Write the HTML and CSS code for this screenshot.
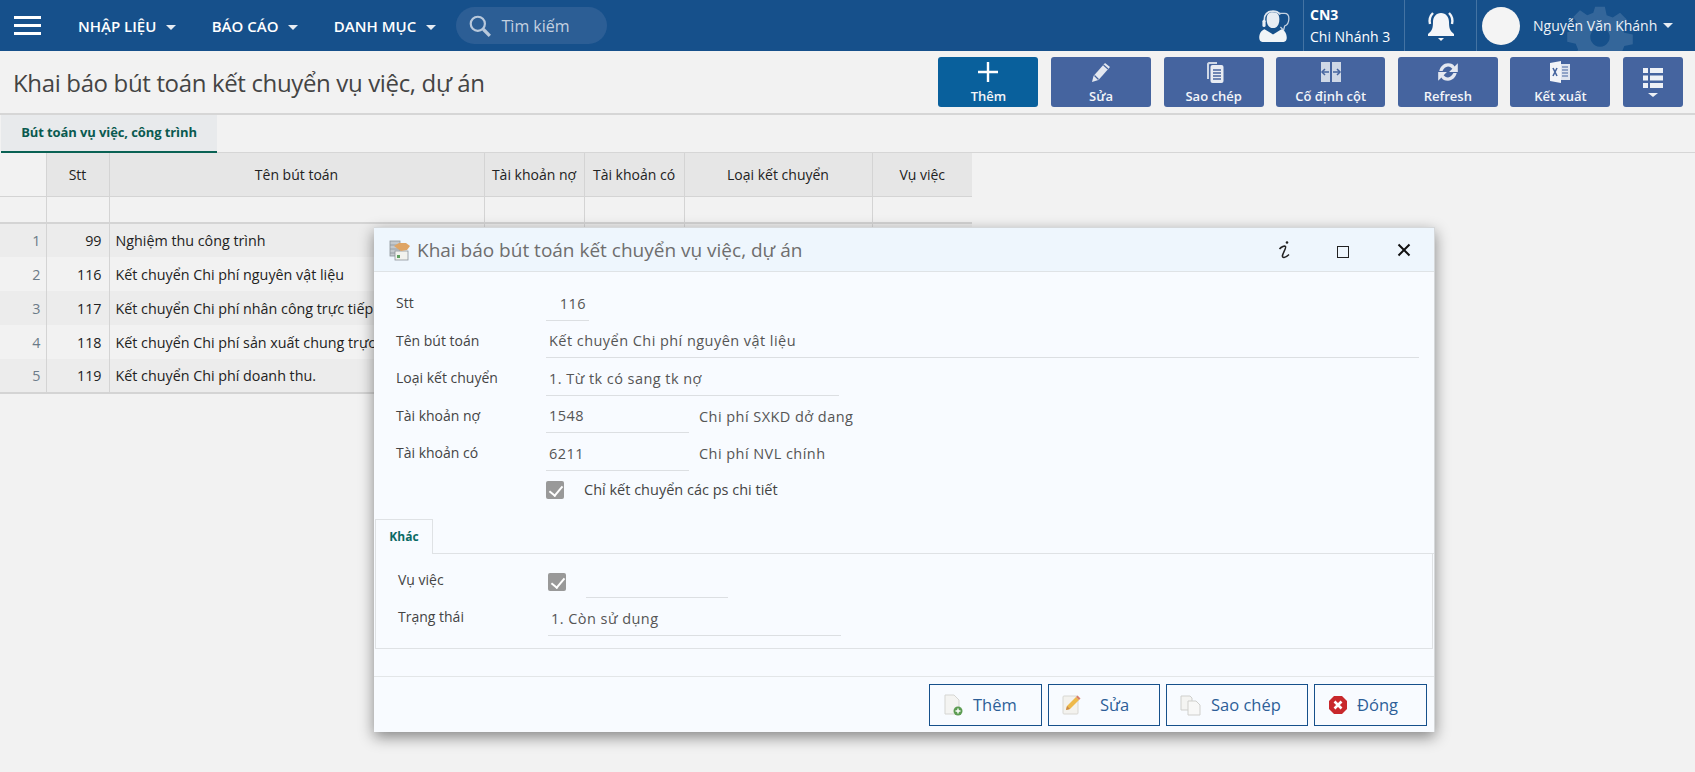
FILE: index.html
```html
<!DOCTYPE html>
<html lang="vi">
<head>
<meta charset="utf-8">
<title>Khai báo bút toán kết chuyển vụ việc, dự án</title>
<link rel="stylesheet" href="styles.css">
</head>
<body>

<!-- thanh menu -->
<header class="navbar">
    <svg class="gear" viewBox="-6 -6 112 112"><path fill="#fff" fill-opacity=".13" fill-rule="evenodd" d="M42 0h16l3 14 10 4 12-8 11 11-8 12 4 10 14 3v16l-14 3-4 10 8 12-11 11-12-8-10 4-3 14H42l-3-14-10-4-12 8L6 83l8-12-4-10-14-3V42l14-3 4-10-8-12L17 6l12 8 10-4zM50 34a16 16 0 1 0 .01 0z"/></svg>
    <div class="hamburger"><span></span><span></span><span></span></div>
    <nav class="menu">
        <a class="menu-item">NHẬP LIỆU <i class="caret"></i></a>
        <a class="menu-item">BÁO CÁO <i class="caret"></i></a>
        <a class="menu-item">DANH MỤC <i class="caret"></i></a>
    </nav>
    <div class="search">
        <svg width="24" height="24" viewBox="0 0 22 22"><circle cx="9" cy="9" r="6.5" fill="none" stroke="#b9c9dc" stroke-width="2"/><path d="M14 14l6 6" stroke="#b9c9dc" stroke-width="3"/></svg>
        <span>Tìm kiếm</span>
    </div>
    <div class="nav-right">
        <div class="nav-cell support">
            <svg width="36" height="36" viewBox="0 0 34 34">
                <path d="M17 4c5 0 6 3 6 7s-2 8-6 8-6-4-6-8 1-7 6-7z" fill="#e8edf3"/>
                <path d="M9 13c-1-7 3-10 8-10 3 0 5 1 7 3" fill="none" stroke="#dfe6ee" stroke-width="1.6"/>
                <rect x="7" y="11" width="3" height="7" rx="1.5" fill="#e8edf3"/>
                <path d="M22 5h6c3 0 4 2 4 5s-1 6-4 7l-1 4-3-3" fill="none" stroke="#c5d2e1" stroke-width="1.2"/>
                <path d="M9 20c-3 1-5 4-5 8 0 2 1 4 3 4h20c2 0 3-2 3-4 0-4-2-7-5-8l-8 5z" fill="#f1f4f7"/>
            </svg>
        </div>
        <div class="nav-cell branch">
            <b>CN3</b>
            <span>Chi Nhánh 3</span>
        </div>
        <div class="nav-cell bell">
            <svg width="32" height="34" viewBox="0 0 32 34">
                <path d="M16 4c5 0 8 4 8 9 0 6 1 9 5 12v2H3v-2c4-3 5-6 5-12 0-5 3-9 8-9z" fill="#f4f6f9"/>
                <path d="M13 29h6l-3 3z" fill="#f4f6f9"/>
                <path d="M5 15c-1-4 0-8 3-11M27 15c1-4 0-8-3-11" fill="none" stroke="#f4f6f9" stroke-width="2.4"/>
            </svg>
        </div>
        <div class="user">
            <div class="avatar"></div>
            <span>Nguyễn Văn Khánh</span>
            <i class="caret"></i>
        </div>
    </div>
</header>

<!-- tiêu đề + nút lệnh -->
<section class="toolbar">
    <h1>Khai báo bút toán kết chuyển vụ việc, dự án</h1>
    <div class="actions">
        <a class="action primary w100">
            <svg width="24" height="24" viewBox="0 0 24 24"><path d="M12 2v20M2 12h20" stroke="#fff" stroke-width="2.4"/></svg>
            Thêm
        </a>
        <a class="action w100">
            <svg width="24" height="24" viewBox="0 0 24 24"><path d="M3 22l1.500-6L16 3l5 4L9.500 20z" fill="#e4e8f0"/><path d="M5.500 15.500l4 4" stroke="#45649f" stroke-width="1.200"/><path d="M14.500 5l4.500 4" stroke="#45649f" stroke-width="1.200"/></svg>
            Sửa
        </a>
        <a class="action w100">
            <svg width="24" height="24" viewBox="0 0 24 24"><path d="M7 19H5V4c0-1 1-2 2-2h8v2H8c-.5 0-1 .5-1 1z" fill="#cfd8e6"/><rect x="8.500" y="5" width="13" height="18" rx="2" fill="#e8ecf3"/><path d="M11 10h8M11 13h8M11 16h8M11 19h8" stroke="#45649f" stroke-width="1.300"/></svg>
            Sao chép
        </a>
        <a class="action w109">
            <svg width="24" height="24" viewBox="0 0 24 24"><rect x="2" y="2" width="9" height="20" fill="#cfd8e6"/><rect x="13" y="2" width="9" height="20" fill="#cfd8e6"/><path d="M3 12h7M21 12h-7" stroke="#45649f" stroke-width="1.500"/><path d="M6 9l-3 3 3 3M18 9l3 3-3 3" fill="none" stroke="#45649f" stroke-width="1.500"/></svg>
            Cố định cột
        </a>
        <a class="action w100">
            <svg width="24" height="24" viewBox="1 2 22 20"><path d="M4 11c1-4 4-7 8-7 3 0 5 1 6 3l3-3v8h-8l3-3c-1-1-2-2-4-2-2 0-4 2-5 4z" fill="#e4e8f0"/><path d="M20 13c-1 4-4 7-8 7-3 0-5-1-6-3l-3 3v-8h8l-3 3c1 1 2 2 4 2 2 0 4-2 5-4z" fill="#e4e8f0"/></svg>
            Refresh
        </a>
        <a class="action w100">
            <svg width="24" height="24" viewBox="0 0 24 24"><rect x="11" y="4" width="11" height="16" fill="#dfe5ef"/><path d="M14 7h6M14 10h6M14 13h6M14 16h6" stroke="#45649f" stroke-width="1.200"/><path d="M2 3l11-2v22L2 21z" fill="#f2f4f8"/><path d="M5 8l4 8M9 8l-4 8" stroke="#45649f" stroke-width="1.600"/></svg>
            Kết xuất
        </a>
        <a class="action list">
            <svg width="20" height="32" viewBox="0 0 20 32"><path d="M0 1h5v5H0zM7 1h13v5H7zM0 8.500h5v5H0zM7 8.500h13v5H7zM0 16h5v5H0zM7 16h13v5H7z" fill="#eef1f6"/><path d="M5 26h10l-5 4z" fill="#eef1f6"/></svg>
        </a>
    </div>
</section>

<div class="tabs">
    <a class="tab active">Bút toán vụ việc, công trình</a>
</div>

<!-- lưới dữ liệu -->
<table class="grid">
    <colgroup>
        <col class="c-no"><col class="c-stt"><col class="c-name"><col class="c-acc"><col class="c-acc2"><col class="c-type"><col class="c-job">
    </colgroup>
    <thead>
        <tr class="head">
            <th class="corner"></th><th>Stt</th><th>Tên bút toán</th><th>Tài khoản nợ</th><th>Tài khoản có</th><th>Loại kết chuyển</th><th>Vụ việc</th>
        </tr>
        <tr class="filter">
            <td></td><td></td><td></td><td></td><td></td><td></td><td></td>
        </tr>
    </thead>
    <tbody>
        <tr><td class="no">1</td><td class="num">99</td><td>Nghiệm thu công trình</td><td></td><td></td><td></td><td></td></tr>
        <tr><td class="no">2</td><td class="num">116</td><td>Kết chuyển Chi phí nguyên vật liệu</td><td></td><td></td><td></td><td></td></tr>
        <tr><td class="no">3</td><td class="num">117</td><td>Kết chuyển Chi phí nhân công trực tiếp</td><td></td><td></td><td></td><td></td></tr>
        <tr><td class="no">4</td><td class="num">118</td><td>Kết chuyển Chi phí sản xuất chung trực tiếp</td><td></td><td></td><td></td><td></td></tr>
        <tr><td class="no">5</td><td class="num">119</td><td>Kết chuyển Chi phí doanh thu.</td><td></td><td></td><td></td><td></td></tr>
    </tbody>
</table>

<!-- hộp thoại -->
<div class="dialog">
    <div class="dialog-title">
        <svg width="22" height="22" viewBox="0 0 22 22">
            <rect x="1" y="2" width="10" height="15" fill="#c4c9cd" stroke="#8d9499" stroke-width=".8"/>
            <path d="M1 6h10M1 10h10M1 14h10" stroke="#8d9499" stroke-width=".8"/>
            <rect x="6" y="12" width="13" height="9" fill="#f2f2ee" stroke="#8d9499" stroke-width=".8"/>
            <path d="M8 16h3v3H8z" fill="#5fa060"/>
            <path d="M5 7l5-3h7l4 3-3 4-6 1-3-2z" fill="#dfa565"/>
        </svg>
        <span class="dialog-name">Khai báo bút toán kết chuyển vụ việc, dự án</span>
        <div class="dialog-tools">
            <svg class="tool-info" width="14" height="20" viewBox="0 0 14 20"><circle cx="9" cy="2.500" r="1.300" fill="#222"/><path d="M1.500 9c2-2.500 5-3.500 6-2.500S5 13 4.500 15.500 7 18.500 11 14.500" fill="none" stroke="#222" stroke-width="1.600"/></svg>
            <span class="tool-max"></span>
            <svg class="tool-close" width="14" height="14" viewBox="0 0 14 14"><path d="M1.500 1.500l11 11M12.500 1.500l-11 11" stroke="#111" stroke-width="2"/></svg>
        </div>
    </div>

    <div class="form">
        <div class="row r-stt"><label>Stt</label><div class="field w-stt right">116</div></div>
        <div class="row"><label>Tên bút toán</label><div class="field w-full">Kết chuyển Chi phí nguyên vật liệu</div></div>
        <div class="row"><label>Loại kết chuyển</label><div class="field w-type">1. Từ tk có sang tk nợ</div></div>
        <div class="row"><label>Tài khoản nợ</label><div class="field w-acc">1548</div><span class="aux">Chi phí SXKD dở dang</span></div>
        <div class="row"><label>Tài khoản có</label><div class="field w-acc">6211</div><span class="aux">Chi phí NVL chính</span></div>
        <div class="row check-row"><label></label><span class="check"></span><span class="check-text">Chỉ kết chuyển các ps chi tiết</span></div>
    </div>

    <div class="sub-tabs"><a class="sub-tab">Khác</a></div>
    <div class="panel">
        <div class="row"><label>Vụ việc</label><span class="check"></span><div class="field w-job"></div></div>
        <div class="row"><label>Trạng thái</label><div class="field w-type">1. Còn sử dụng</div></div>
    </div>

    <div class="dialog-foot">
        <a class="btn b-add">
            <svg width="20" height="22" viewBox="0 0 20 22"><path d="M2 1h9l5 5v14H2z" fill="#f4f4f2" stroke="#d5d5d2"/><circle cx="15" cy="17" r="4.500" fill="#5c9c52"/><path d="M15 14.500v5M12.500 17h5" stroke="#fff" stroke-width="1.400"/></svg>
            Thêm
        </a>
        <a class="btn b-edit">
            <svg width="20" height="22" viewBox="0 0 20 22"><rect x="1" y="2" width="15" height="18" rx="1" fill="#f3f2ee" stroke="#d8d7d2"/><path d="M4 16l1-4 9-9 3 3-9 9z" fill="#eeb94a"/><path d="M4 16l1-4 3 3z" fill="#c98a4a"/><path d="M14 3l3 3 1.500-1.500-3-3z" fill="#d77f6a"/></svg>
            Sửa
        </a>
        <a class="btn b-copy">
            <svg width="22" height="22" viewBox="0 0 22 22"><path d="M1 2h9l2 2v12H1z" fill="#f4f4f2" stroke="#cfcfcc"/><path d="M8 7h8l4 4v10H8z" fill="#f8f8f7" stroke="#cfcfcc"/></svg>
            Sao chép
        </a>
        <a class="btn b-close">
            <svg width="20" height="20" viewBox="0 0 20 20"><path d="M6 1h8l5 5v8l-5 5H6l-5-5V6z" fill="#c8282c"/><path d="M6.500 6.500l7 7M13.500 6.500l-7 7" stroke="#fff" stroke-width="2.600"/></svg>
            Đóng
        </a>
    </div>
</div>

</body>
</html>
```

FILE: styles.css
```css
* {
    box-sizing: border-box;
}
html, body {
    height: 100%;
}
body {
    margin: 0;
    background-color: #f2f2f2;
    font-family: "Open Sans", "Noto Sans", sans-serif;
    font-size: 13px;
    color: #333;
    overflow: hidden;
    position: relative;
}

/* thanh menu */
.navbar {
    display: flex;
    align-items: center;
    height: 51px;
    background-color: #16508b;
    color: #fff;
    position: relative;
    overflow: hidden;
}
.gear {
    position: absolute;
    left: 1566px;
    top: 3px;
    width: 68px;
    height: 68px;
}
.hamburger {
    display: flex;
    flex-direction: column;
    gap: 5px;
    width: 27px;
    margin-left: 14px;
}
.hamburger span {
    height: 3px;
    background-color: #fff;
}
.menu {
    display: flex;
    margin-left: 37px;
}
.menu-item {
    font-size: 15px;
    font-weight: 600;
    margin-right: 35.500px;
    white-space: nowrap;
}
.caret {
    display: inline-block;
    width: 0;
    height: 0;
    margin-left: 6px;
    vertical-align: 2px;
    border-left: 5px solid transparent;
    border-right: 5px solid transparent;
    border-top: 5px solid #e6ecf3;
}
.search {
    display: flex;
    align-items: center;
    gap: 10px;
    width: 151px;
    height: 37px;
    margin-left: -16px;
    padding-left: 12px;
    border-radius: 19px;
    background-color: #2c5e95;
    color: #c4d1e0;
    font-size: 16px;
}
.nav-right {
    display: flex;
    align-items: stretch;
    height: 51px;
    margin-left: auto;
    position: relative;
}
.nav-cell {
    display: flex;
    align-items: center;
    justify-content: center;
}
.support {
    width: 50px;
    padding-right: 10px;
}
.branch {
    flex-direction: column;
    align-items: flex-start;
    width: 102px;
    padding-left: 6px;
    border-left: 1px solid #4473a3;
    border-right: 1px solid #4473a3;
    line-height: 22px;
    font-size: 14px;
}
.branch b {
    font-weight: 700;
}
.bell {
    width: 72px;
    border-right: 1px solid #4473a3;
}
.user {
    display: flex;
    align-items: center;
    width: 218px;
    padding-left: 5px;
    font-size: 14px;
    color: #eef2f7;
}
.avatar {
    width: 38px;
    height: 38px;
    margin-right: 13px;
    border-radius: 50%;
    background-color: #f4f4f4;
}

/* tiêu đề + nút lệnh */
.toolbar {
    display: flex;
    align-items: center;
    justify-content: space-between;
    height: 64px;
    padding: 0 12px 0 13px;
    border-bottom: 2px solid #d6d6d6;
}
.toolbar h1 {
    margin: 0;
    font-size: 24px;
    font-weight: 400;
    color: #444;
    letter-spacing: -.35px;
}
.actions {
    display: flex;
    gap: 12.600px;
}
.action {
    display: flex;
    flex-direction: column;
    align-items: center;
    justify-content: space-between;
    height: 50px;
    padding: 3px 0 2px;
    border-radius: 3px;
    background-color: #45649f;
    color: #f3f5f9;
    font-size: 13px;
    font-weight: 600;
    white-space: nowrap;
}
.action.primary {
    background-color: #09609c;
}
.w100 {
    width: 100px;
}
.w109 {
    width: 109px;
}
.action.list {
    width: 60px;
    justify-content: center;
}

.tabs {
    height: 38px;
    border-bottom: 1px solid #d6d6d6;
    margin-left: 1px;
}
.tab {
    display: inline-block;
    width: 216px;
    height: 38px;
    line-height: 35px;
    text-align: center;
    background-color: #e8eaec;
    border-bottom: 2px solid #0a6254;
    color: #0a5a50;
    font-size: 13px;
    font-weight: 700;
    letter-spacing: -.1px;
}

/* lưới dữ liệu */
.grid {
    border-collapse: collapse;
    table-layout: fixed;
    width: 972px;
    font-size: 14.300px;
}
.c-no { width: 46px; }
.c-stt { width: 63px; }
.c-name { width: 375px; }
.c-acc { width: 100px; }
.c-acc2 { width: 100px; }
.c-type { width: 188px; }
.c-job { width: 100px; }
.grid th, .grid td {
    border-left: 1px solid #d4d4d4;
    white-space: nowrap;
    overflow: hidden;
}
.grid th:first-child, .grid td:first-child {
    border-left: none;
}
.grid .head th {
    height: 43px;
    background-color: #e6e6e6;
    border-bottom: 1px solid #d4d4d4;
    font-weight: 500;
    font-size: 14px;
    color: #222;
}
.grid .head .corner {
    background-color: #f2f2f2;
}
.grid .filter td {
    height: 27px;
    border-bottom: 2px solid #d4d4d4;
}
.grid tbody td {
    height: 34px;
    padding: 0 6px;
    color: #222;
}
.grid tbody tr:nth-child(odd) td {
    background-color: #ececec;
}
.grid tbody tr:last-child td {
    border-bottom: 2px solid #d4d4d4;
}
.grid tbody td.no {
    background-color: #f2f2f2;
    text-align: right;
    padding-right: 5px;
    color: #6b7b88;
}
.grid tbody td.num {
    text-align: right;
    padding-right: 7px;
}

/* hộp thoại */
.dialog {
    position: absolute;
    left: 374px;
    top: 227px;
    width: 1061px;
    height: 505px;
    background-color: #f8fbff;
    box-shadow: 0 5px 14px rgba(0, 0, 0, .45);
    border: 1px solid #d5d8da;
    border-bottom: none;
    border-left: none;
    display: flex;
    flex-direction: column;
}
.dialog-title {
    display: flex;
    align-items: center;
    flex: none;
    height: 44px;
    padding-left: 15px;
    background-color: #eef6fd;
    border-bottom: 1px solid #dfe3e6;
}
.dialog-name {
    margin-left: 6px;
    font-size: 19px;
    color: #6e6e6e;
}
.dialog-tools {
    display: flex;
    align-items: center;
    margin-left: auto;
}
.tool-info {
    margin-right: 45px;
}
.tool-max {
    width: 12px;
    height: 12px;
    margin-right: 48px;
    margin-top: 5px;
    border: 1px solid #222;
}
.tool-close {
    margin-right: 23px;
}
.form {
    padding: 14px 0 0 22px;
}
.row {
    display: flex;
    align-items: center;
    height: 37.500px;
    color: #444;
    font-size: 14px;
}
.row label {
    flex: none;
    width: 150px;
    margin-top: -4px;
}
.field {
    height: 32px;
    line-height: 29px;
    padding-left: 3px;
    border-bottom: 1px solid #dcdfe2;
    color: #555;
    font-size: 14.500px;
    letter-spacing: .45px;
    white-space: nowrap;
}
.right {
    text-align: right;
    padding-right: 3px;
}
.w-stt { width: 43px; }
.w-full { width: 873px; }
.w-type { width: 293px; }
.w-acc { width: 143px; }
.w-job { width: 142px; margin-left: 20px; }
.aux {
    margin-left: 10px;
    margin-top: -2px;
    color: #555;
    font-size: 14.500px;
    letter-spacing: .45px;
}
.check {
    display: block;
    flex: none;
    width: 18px;
    height: 18px;
    border-radius: 2px;
    background-color: #999;
    position: relative;
}
.check::after {
    content: "";
    position: absolute;
    left: 6px;
    top: 2px;
    width: 6px;
    height: 11px;
    border-right: 2px solid #fff;
    border-bottom: 2px solid #fff;
    transform: rotate(40deg);
}
.check-row {
    height: 30px;
    margin-top: 1px;
}
.check-text {
    margin-left: 20px;
    color: #444;
    font-size: 14.500px;
}
.sub-tabs {
    display: flex;
    flex: none;
    height: 35px;
    margin-top: 14px;
    margin-left: 1px;
    border-bottom: 1px solid #dfe2e5;
}
.sub-tab {
    width: 58px;
    height: 35px;
    margin-bottom: -1px;
    line-height: 33px;
    text-align: center;
    background-color: #f8fbff;
    border: 1px solid #dfe2e5;
    border-bottom: none;
    color: #0a6a64;
    font-size: 12px;
    font-weight: 700;
}
.panel {
    flex: none;
    height: 95px;
    width: 1058px;
    margin-left: 1px;
    padding: 10px 0 0 22px;
    border: 1px solid #dfe2e5;
    border-top: none;
}
.panel label {
    margin-top: -6px;
}
.dialog-foot {
    display: flex;
    flex: none;
    justify-content: flex-end;
    gap: 6px;
    height: 56px;
    margin-top: 27px;
    padding: 7px 7px 0 0;
    border-top: 1px solid #e3e6e8;
}
.btn {
    display: flex;
    align-items: center;
    height: 42px;
    border: 1px solid #16508b;
    color: #2d5f98;
    font-size: 16.500px;
}
.btn svg {
    flex: none;
}
.b-add { width: 113px; padding-left: 13px; gap: 10px; }
.b-edit { width: 112px; padding-left: 13px; gap: 18px; }
.b-copy { width: 142px; padding-left: 13px; gap: 9px; }
.b-close { width: 113px; padding-left: 13px; gap: 9px; }
```
